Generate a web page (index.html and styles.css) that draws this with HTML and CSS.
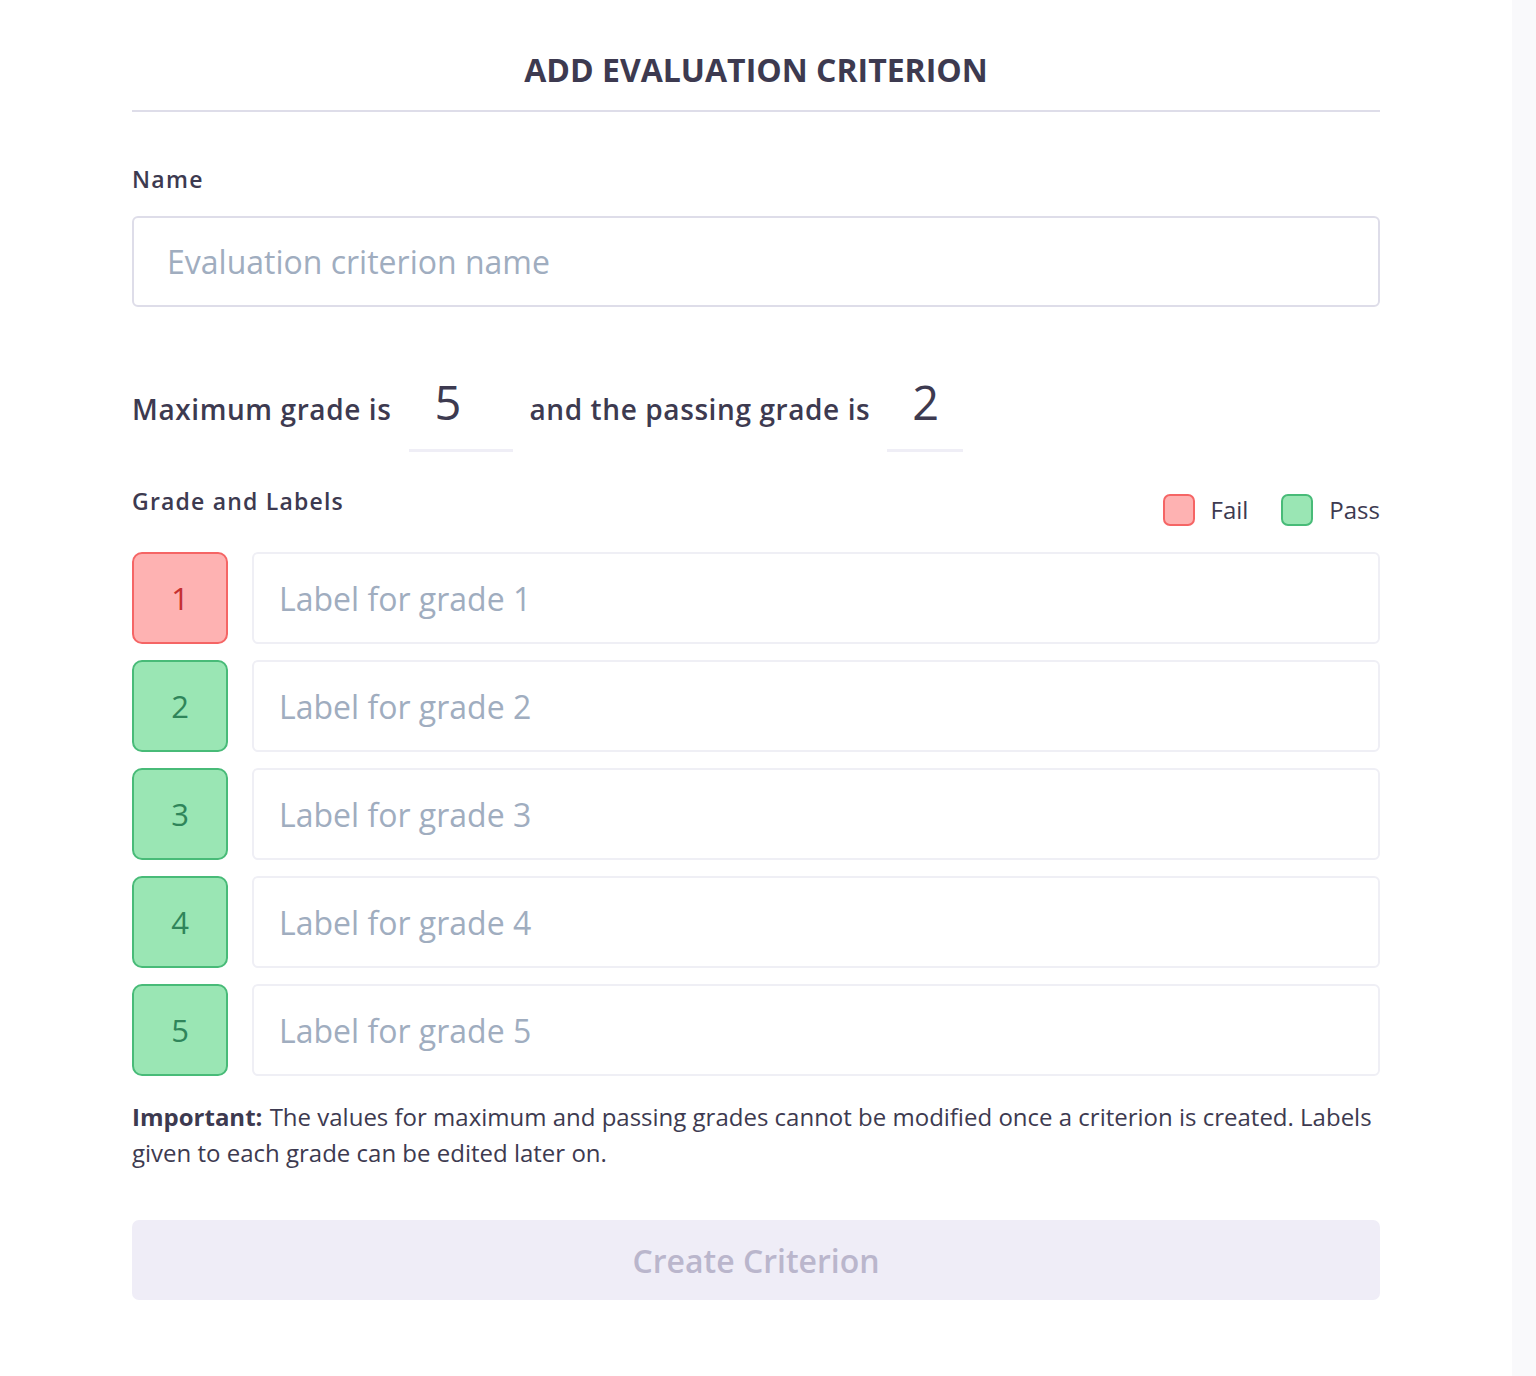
FILE: index.html
```html
<!DOCTYPE html>
<html lang="en">
<head>
<meta charset="utf-8">
<title>Add Evaluation Criterion</title>
<link rel="stylesheet" href="styles.css">
</head>
<body>
<div class="page">
  <main class="main">
    <div class="form">
      <h1 class="title">ADD EVALUATION CRITERION</h1>
      <div class="divider"></div>

      <label class="field-label">Name</label>
      <div class="name-input">Evaluation criterion name</div>

      <div class="grade-line">
        <span class="grade-text">Maximum grade is</span>
        <span class="num-input num-max">5</span>
        <span class="grade-text">and the passing grade is</span>
        <span class="num-input num-pass">2</span>
      </div>

      <div class="labels-head">
        <span class="field-label head-label">Grade and Labels</span>
        <div class="legend">
          <span class="swatch swatch-fail"></span><span class="legend-text">Fail</span>
          <span class="swatch swatch-pass"></span><span class="legend-text">Pass</span>
        </div>
      </div>

      <div class="grades">
        <div class="grade-row"><div class="grade-box fail">1</div><div class="label-input">Label for grade 1</div></div>
        <div class="grade-row"><div class="grade-box pass">2</div><div class="label-input">Label for grade 2</div></div>
        <div class="grade-row"><div class="grade-box pass">3</div><div class="label-input">Label for grade 3</div></div>
        <div class="grade-row"><div class="grade-box pass">4</div><div class="label-input">Label for grade 4</div></div>
        <div class="grade-row"><div class="grade-box pass">5</div><div class="label-input">Label for grade 5</div></div>
      </div>

      <p class="note"><strong class="note-lead">Important:</strong> The values for maximum and passing grades cannot be modified once a criterion is created. Labels given to each grade can be edited later on.</p>

      <div class="create-btn">Create Criterion</div>
    </div>
  </main>
  <aside class="rail"></aside>
</div>
</body>
</html>
```

FILE: styles.css
```css
* { box-sizing: border-box; }
html, body { margin: 0; padding: 0; }
body {
  font-family: "Open Sans", "Liberation Sans", sans-serif;
  color: #3d3a50;
  background: #ffffff;
}
.page {
  display: flex;
  min-height: 1376px;
}
.main {
  flex: 1;
  background: #ffffff;
}
.rail {
  width: 24px;
  background: #f9f9fb;
}
.form {
  width: 1248px;
  margin: 0 auto;
  display: flex;
  flex-direction: column;
}
.title {
  margin: 48px 0 0;
  font-size: 32px;
  line-height: 44px;
  font-weight: 700;
  text-align: center;
  color: #3d3a50;
  letter-spacing: 0;
}
.divider {
  height: 2px;
  background: #dedde9;
  margin-top: 18px;
}
.field-label {
  display: block;
  font-size: 23px;
  line-height: 30px;
  font-weight: 600;
  letter-spacing: 1.3px;
  color: #3d3a50;
}
.head-label { margin-top: 2px; letter-spacing: 1.2px; }
.divider + .field-label { margin-top: 52px; }
.name-input {
  margin-top: 22px;
  height: 91px;
  border: 2px solid #dedde9;
  border-radius: 6px;
  padding-left: 33px;
  display: flex;
  align-items: center;
  font-size: 32px;
  color: #a0adbf;
}
.grade-line {
  display: flex;
  align-items: baseline;
  margin-top: 67px;
}
.grade-text {
  font-size: 28px;
  font-weight: 600;
  letter-spacing: 0.6px;
  color: #3d3a50;
}
.num-input {
  display: block;
  font-size: 47px;
  line-height: 56px;
  padding-left: 25px;
  padding-bottom: 19px;
  border-bottom: 3px solid #efeef6;
  color: #3d3a50;
}
.num-max { width: 104px; margin: 0 16px 0 18px; }
.num-pass { width: 76px; margin-left: 17px; }
.labels-head {
  display: flex;
  justify-content: space-between;
  align-items: flex-start;
  margin-top: 32px;
}
.legend {
  display: flex;
  align-items: center;
  margin-top: 10px;
}
.swatch {
  width: 32px;
  height: 32px;
  border-radius: 7px;
  border: 2px solid;
}
.swatch-fail { background: #feb2b2; border-color: #f56565; }
.swatch-pass { background: #9ae6b4; border-color: #48bb78; margin-left: 33px; }
.legend-text {
  font-size: 24px;
  line-height: 32px;
  margin-left: 16px;
  color: #3d3a50;
}
.grades {
  margin-top: 26px;
  display: flex;
  flex-direction: column;
  gap: 16px;
}
.grade-row {
  display: flex;
  gap: 24px;
}
.grade-box {
  width: 96px;
  height: 92px;
  border-radius: 10px;
  border: 2px solid;
  display: flex;
  align-items: center;
  justify-content: center;
  font-size: 31px;
}
.grade-box.fail { background: #feb2b2; border-color: #f56565; color: #c53030; }
.grade-box.pass { background: #9ae6b4; border-color: #48bb78; color: #2f855a; }
.label-input {
  flex: 1;
  height: 92px;
  border: 2px solid #efeff5;
  border-radius: 6px;
  padding-left: 25px;
  display: flex;
  align-items: center;
  font-size: 32px;
  color: #a0adbf;
}
.note {
  margin: 23px 0 0;
  font-size: 24px;
  line-height: 36px;
  color: #3d3a50;
}
.note-lead { font-weight: 700; margin-right: 1px; }
.create-btn {
  margin-top: 49px;
  height: 80px;
  border-radius: 7px;
  background: #efedf7;
  color: #bab6cc;
  font-size: 32px;
  font-weight: 600;
  display: flex;
  align-items: center;
  justify-content: center;
}
```
